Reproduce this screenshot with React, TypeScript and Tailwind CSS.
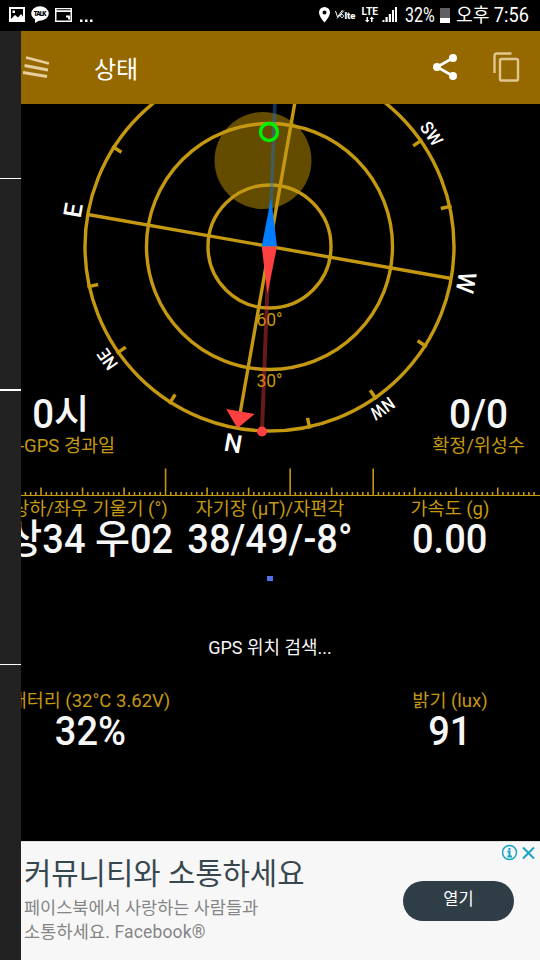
import React from 'react';

const GOLD = '#c49810';
const CX = 269.5;
const CY = 142.5;
const R = 184.5;
const HEADING = 190;

const cardinals = [
  { name: 'N', angle: 0 },
  { name: 'E', angle: 90 },
  { name: 'W', angle: 270 },
];

const intercardinals = [
  { name: 'NE', angle: 45 },
  { name: 'SW', angle: 225 },
  { name: 'NW', angle: 315 },
];

const ticks = Array.from({ length: 16 }, (_, i) => i * 22.5).filter((a) => a % 90 !== 0);

const Compass = () => (
  <svg width="540" height="364" className="block" fontFamily="Roboto, 'Liberation Sans', sans-serif">
    <circle cx="263" cy="56.5" r="48.5" fill="#634c00" />
    <g fill="none" stroke={GOLD} strokeWidth="3.4">
      <circle cx={CX} cy={CY} r={R} />
      <circle cx={CX} cy={CY} r="123" />
      <circle cx={CX} cy={CY} r="61.5" />
      <g transform={`rotate(${HEADING} ${CX} ${CY})`}>
        <path d={`M${CX - R} ${CY}h${R * 2}M${CX} ${CY - R}v${R * 2}`} />
        {ticks.map((a) => (
          <path key={a} d={`M${CX} ${CY - R - 2}v11`} transform={`rotate(${a} ${CX} ${CY})`} />
        ))}
      </g>
    </g>
    <g fill={GOLD} fontSize="17.5" textAnchor="middle">
      <text x="269.5" y="221.5">60°</text>
      <text x="269.5" y="283">30°</text>
    </g>
    <g transform={`rotate(${HEADING} ${CX} ${CY})`} textAnchor="middle" fill="#fff">
      {cardinals.map((c) => (
        <text key={c.name} x={CX + 1.5} y={CY - R - 6.5} fontSize="25" fontWeight="500" textLength={c.name === 'W' ? 21 : undefined} lengthAdjust="spacingAndGlyphs" transform={`rotate(${c.angle} ${CX} ${CY})`}>
          {c.name}
        </text>
      ))}
      {intercardinals.map((c) => (
        <text key={c.name} x={CX + 0.5} y={CY - R - 6.5} fontSize="18" fontWeight="500" textLength={c.name === 'NE' ? 21 : 25} lengthAdjust="spacingAndGlyphs" transform={`rotate(${c.angle} ${CX} ${CY})`}>
          {c.name}
        </text>
      ))}
      <path d={`M${CX} ${CY - R}l-14.5 17h29z`} fill="#ff4040" />
    </g>
    {/* Magnetic needle */}
    <path d="M269.5 142.5L275 -4" stroke="#1c70c8" strokeOpacity="0.45" strokeWidth="3.6" />
    <path d="M269 142.5L262 327" stroke="#ff4040" strokeOpacity="0.4" strokeWidth="4" />
    <path d="M261.7 142.5L271 94L277 142.5z" fill="#007eff" />
    <path d="M261.7 142.5h15.3L267.5 190z" fill="#ff4040" />
    <circle cx="262" cy="327.5" r="5" fill="#ff4040" />
    <circle cx="269" cy="28" r="8.5" fill="none" stroke="#00f000" strokeWidth="3.4" />
  </svg>
);

const Ruler = () => {
  const marks = Array.from({ length: 104 }, (_, i) => i);
  return (
    <svg width="540" height="29" className="block" stroke={GOLD}>
      <path d="M0 27.500H540" strokeWidth="1.2" />
      {marks.map((i) => {
        const x = i * 5.19 - 0.5;
        const tall = i === 32 || i === 56 || i === 72;
        const height = tall ? 27 : i % 8 === 0 ? 8 : 3.5;
        return <path key={i} d={`M${x} 27.500v-${height}`} strokeWidth="1.6" />;
      })}
    </svg>
  );
};

type ReadingProps = { label: string; value: string };

const Reading = ({ label, value }: ReadingProps) => (
  <div className="flex w-[180px] flex-col items-center whitespace-nowrap">
    <div className="h-[21px] text-[18.5px] leading-[21px] text-[#c49810]">{label}</div>
    <div className="h-[41px] scale-x-[0.95] text-[40px] leading-[40px] font-medium text-[#f7f7f7]">{value}</div>
  </div>
);

const StatusBar = () => (
  <div className="flex h-[31px] items-center bg-black pr-[11px] pl-[9px] text-white">
    <svg width="90" height="31" fill="#fff">
      <path fillRule="evenodd" d="M0 7h16v15H0zM2 9v10l4-4 3 2.500 3-3.500 2 2.500V9zM3.500 10.500h2.500v2.500H3.500z" />
      <ellipse cx="31" cy="13.5" rx="8.8" ry="7.2" />
      <path d="M26 18v5l5-3z" />
      <text x="31" y="16" fontSize="6.5" fontWeight="900" fill="#000" textAnchor="middle" fontFamily="Roboto, sans-serif" textLength="13">TALK</text>
      <path fillRule="evenodd" d="M46 8h17v14H46zM47.5 12v8.500h14V12zM47.500 9.200v1h14v-1zM57 15.500h4v4h-2v-2h-2z" />
      <path d="M71 19.500h2.500v2.500h-2.500zM76 19.500h2.500v2.500h-2.500zM81 19.500h2.500v2.500h-2.500z" />
    </svg>
    <svg width="82" height="31" className="ml-auto" fill="#fff" fontFamily="Roboto, sans-serif">
      <path fillRule="evenodd" d="M8.500 7A5.500 5.500 0 0 0 3 12.500c0 4 5.500 10 5.500 10s5.500-6 5.500-10A5.500 5.500 0 0 0 8.500 7zM8.500 10.500a2 2 0 1 1 0 4 2 2 0 0 1 0-4z" />
      <path d="M19.500 11l2 6 5-7M21 18.500l7-8M26 14.500a1.500 1.500 0 1 0 .1 0" fill="none" stroke="#fff" strokeWidth="1" />
      <text x="28.500" y="19" fontSize="9.500" fontWeight="900" textLength="11" lengthAdjust="spacingAndGlyphs">lte</text>
      <text x="45.500" y="15" fontSize="10" fontWeight="700" textLength="16.500" lengthAdjust="spacingAndGlyphs">LTE</text>
      <path d="M50.500 17h1.500v3h1.500l-2.200 2.500-2.300-2.500h1.500zM55 22h1.500v-3h1.500l-2.200-2.500-2.300 2.500H55z" />
      <path d="M66.500 22v-2h2v2zM69.500 22v-5h2.200v5zM72.800 22v-8H75v8zM76 22V10h2v12zM79 22V7h2v15z" />
    </svg>
    <div className="ml-[7px] w-[30px] origin-left scale-x-[0.82] text-[19.5px] leading-[31px]">32%</div>
    <div className="ml-[5px] flex h-[15px] w-[10px] flex-col justify-end bg-[#606060]">
      <div className="h-[5px] bg-white" />
    </div>
    <div className="ml-[6px] w-[73px] origin-left scale-x-[0.93] text-[19.5px] leading-[31px] whitespace-nowrap">오후 7:56</div>
  </div>
);

const AppBar = () => (
  <header className="flex h-[73px] items-center bg-[#966800]">
    <svg width="52" height="73" fill="none" stroke="#e5cf9d" strokeWidth="2.800">
      <path d="M26 26.500l23 6M24.500 34.500l23.500 4.500M23 41.500l24 4" />
    </svg>
    <h1 className="mt-[4px] ml-[42px] text-[24px] text-white">상태</h1>
    <svg width="27" height="30" viewBox="0 0 27 30" className="-mt-[1px] ml-auto" fill="#fff" stroke="#fff">
      <path d="M22 6L6 15l16 9" fill="none" strokeWidth="2.600" />
      <circle cx="22" cy="6" r="4" stroke="none" />
      <circle cx="6" cy="15" r="4" stroke="none" />
      <circle cx="22" cy="24" r="4" stroke="none" />
    </svg>
    <svg width="27" height="30" viewBox="0 0 27 30" className="-mt-[1px] mr-[20px] ml-[35px]" fill="none" stroke="#e0c792" strokeWidth="2.400">
      <path d="M1.500 21V4Q1.500 1.500 4 1.500H18.500" />
      <rect x="7" y="7" width="18" height="21.500" rx="1.500" />
    </svg>
  </header>
);

const AdBanner = () => (
  <div className="relative flex h-[119px] items-center border-t border-[#dedede] bg-[#f7f7f7]">
    <div className="-mt-[4px] pl-[24px] whitespace-nowrap">
      <div className="text-[29.7px] leading-[40px] text-[#37474f]">커뮤니티와 소통하세요</div>
      <div className="mt-[2px] text-[17.5px] leading-[24px] text-[#858585]">페이스북에서 사랑하는 사람들과</div>
      <div className="text-[17.5px] leading-[24px] tracking-[0.15px] text-[#858585]">소통하세요. Facebook®</div>
    </div>
    <button className="mr-[26px] ml-auto h-[40px] w-[111px] rounded-full bg-[#2f3e46] pb-[1px] text-[16.5px] text-white">열기</button>
    <svg width="38" height="20" className="absolute top-0 right-0" fill="none" stroke="#1aa3c4" strokeWidth="1.500">
      <circle cx="7.500" cy="10.500" r="7" />
      <path d="M7.500 6v2M5.500 9.500h2v5M5.500 14.500h4.500" strokeWidth="2" />
      <path d="M21 5.500l11 11M32 5.500l-11 11" strokeWidth="2" />
    </svg>
  </div>
);

const App = () => {
  return (
    <div className="relative flex h-[960px] w-[540px] flex-col overflow-hidden bg-black font-['Roboto','Noto_Sans_CJK_KR',sans-serif]">
      <StatusBar />
      <AppBar />

      <section className="relative h-[364px]">
        <Compass />
        <div className="absolute top-[291px] left-0 flex w-[121px] flex-col items-center whitespace-nowrap">
          <div className="scale-x-[0.96] text-[40px] leading-[40px] font-medium text-[#f7f7f7]">0시</div>
          <div className="ml-[13px] text-[18.5px] leading-[22px] text-[#c49810]">-GPS 경과일</div>
        </div>
        <div className="absolute top-[291px] right-0 flex w-[123px] flex-col items-center whitespace-nowrap">
          <div className="scale-x-[0.97] text-[40px] leading-[40px] font-medium text-[#f7f7f7]">0/0</div>
          <div className="text-[18.5px] leading-[22px] text-[#c49810]">확정/위성수</div>
        </div>
      </section>

      <Ruler />

      <div className="flex pt-[2px]">
        <Reading label="상하/좌우 기울기 (°)" value="상34 우02" />
        <Reading label="자기장 (µT)/자편각" value="38/49/-8°" />
        <Reading label="가속도 (g)" value="0.00" />
      </div>

      <div className="mt-[15px] ml-[267px] h-[5px] w-[6px] bg-[#5070e8]" />
      <div className="mt-[55px] text-center text-[18px] leading-[24px] text-[#f7f7f7]">GPS 위치 검색...</div>

      <div className="mt-[31px] flex justify-between">
        <Reading label="배터리 (32°C 3.62V)" value="32%" />
        <Reading label="밝기 (lux)" value="91" />
      </div>

      <div className="mt-auto">
        <AdBanner />
      </div>

      {/* Edge of the sliding drawer */}
      <div className="absolute top-[31px] bottom-0 left-0 w-[21px] bg-[#222]">
        <div className="mt-[147px] h-[1px] bg-white" />
        <div className="mt-[210px] h-[2px] bg-white" />
        <div className="mt-[273px] h-[1px] bg-white" />
      </div>
    </div>
  );
};

export default App;
